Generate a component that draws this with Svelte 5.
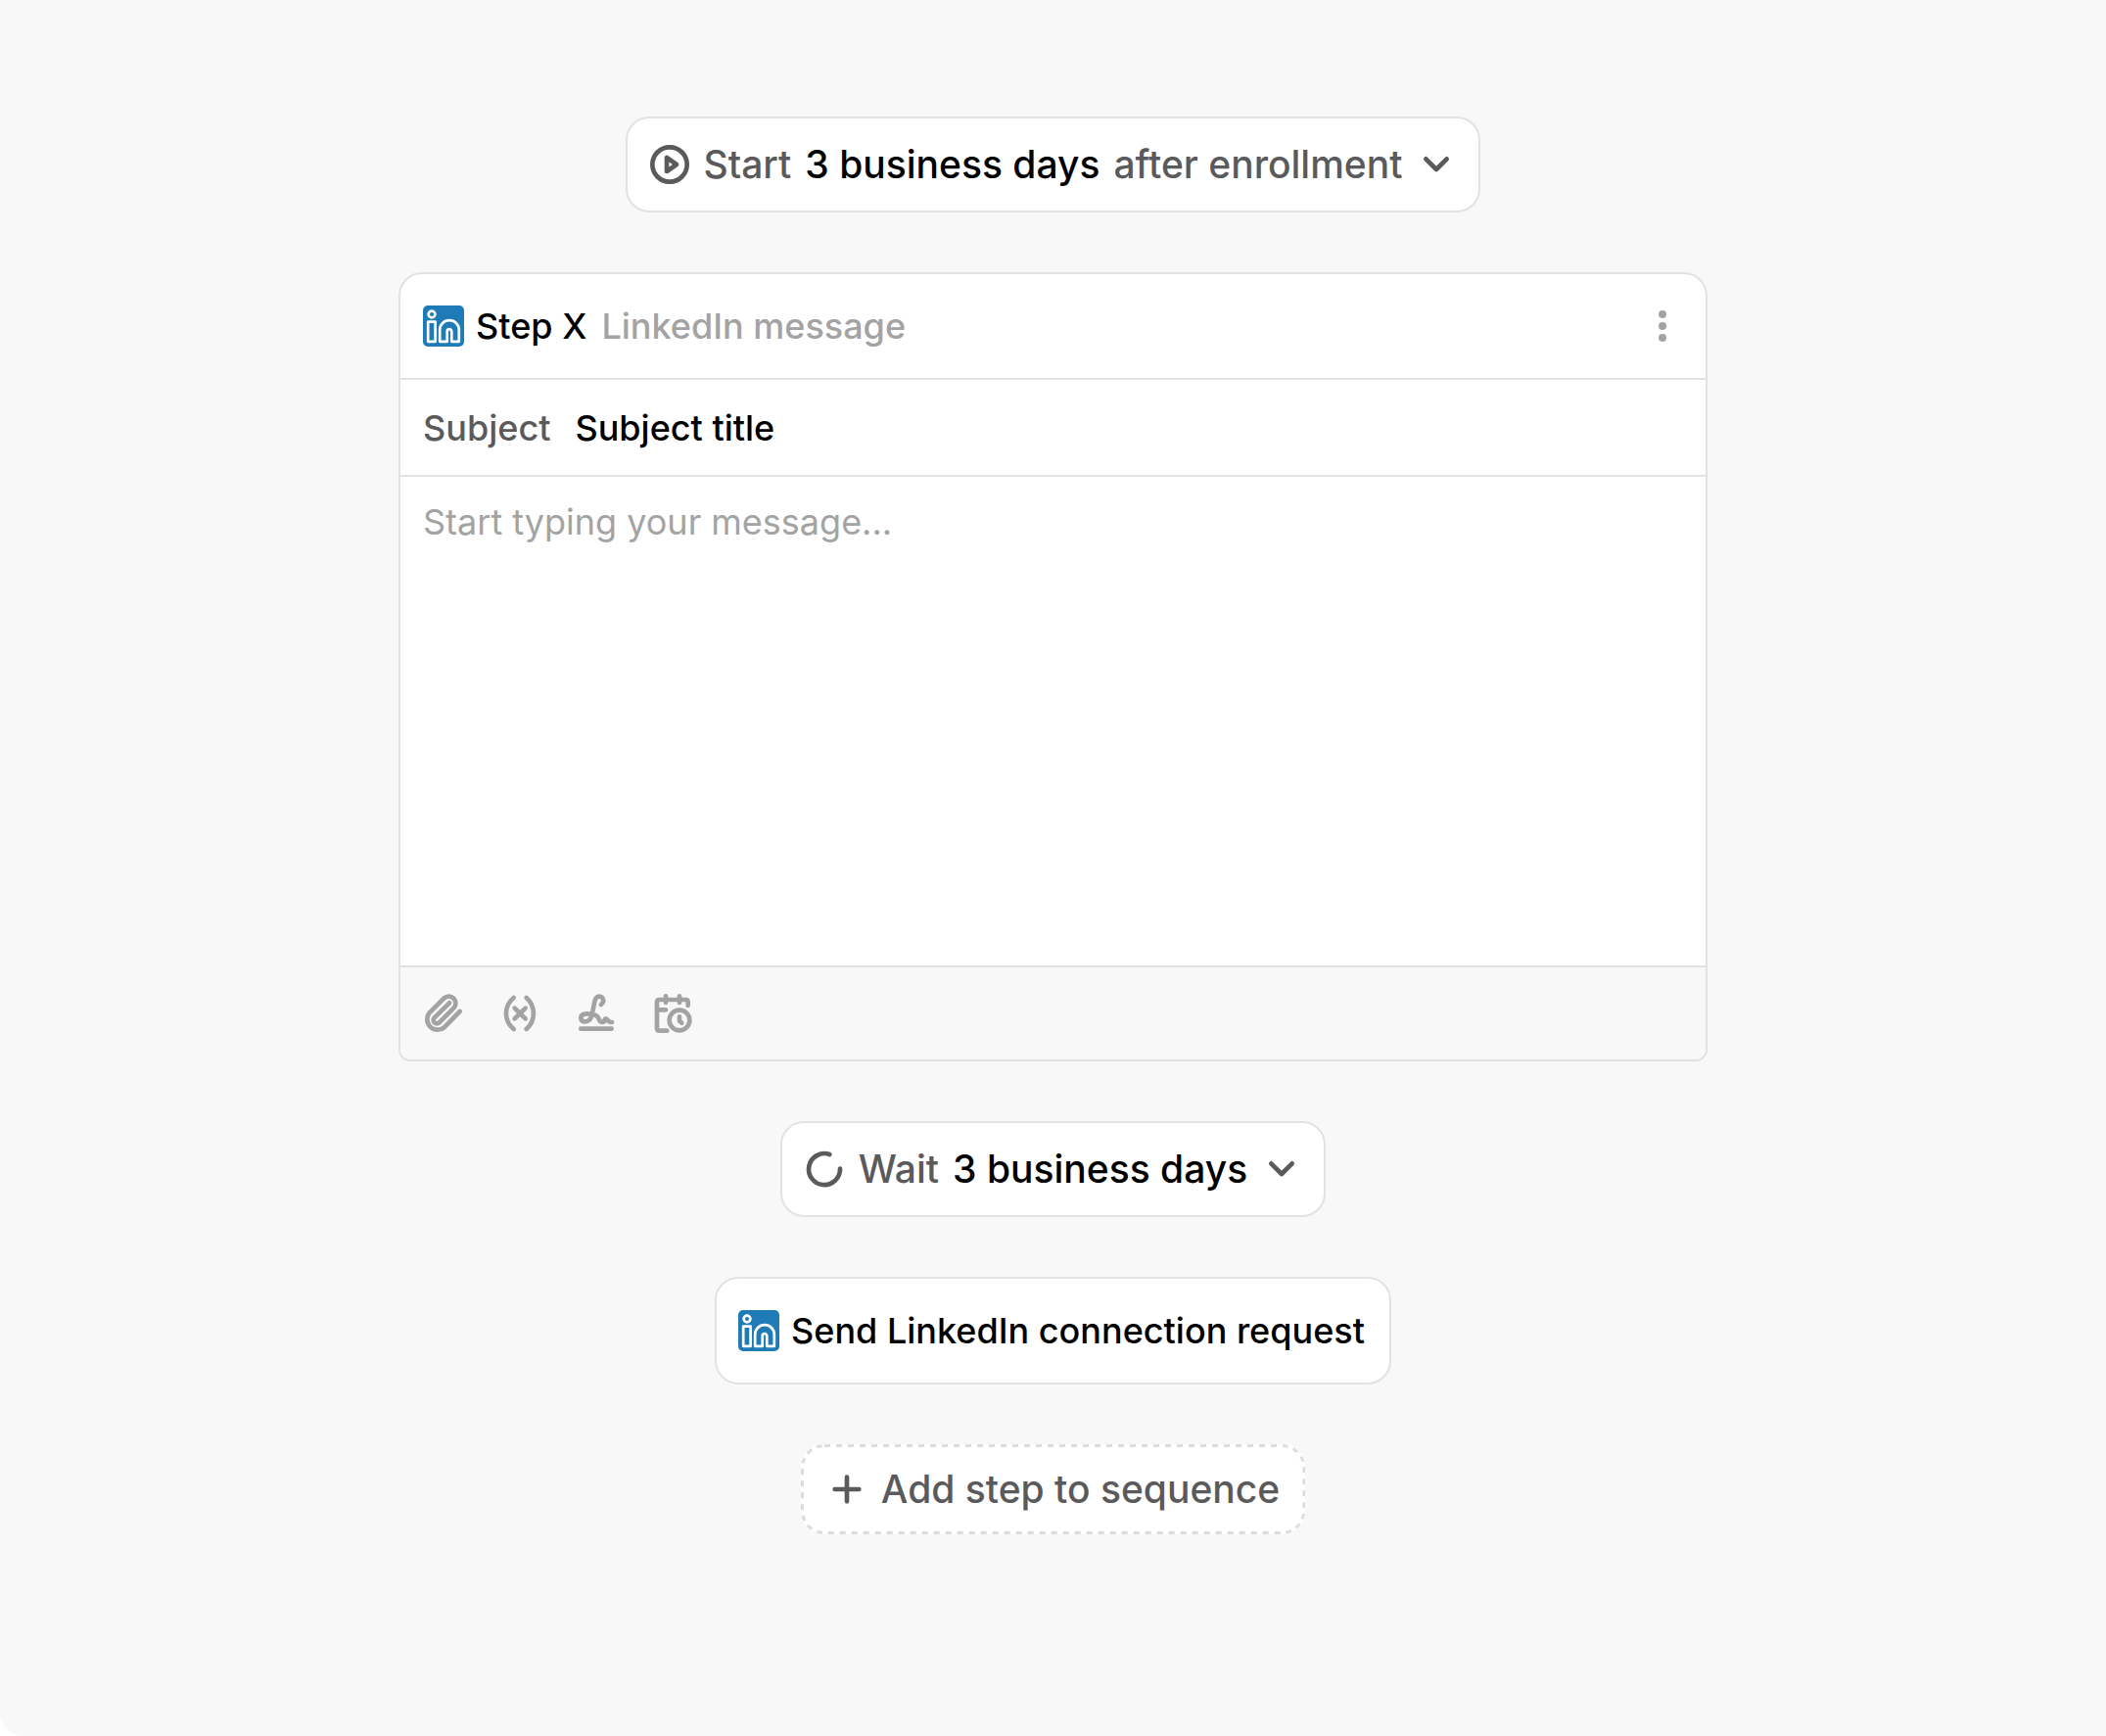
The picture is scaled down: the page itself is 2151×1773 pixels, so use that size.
<script lang="ts">
  let subject = 'Subject title';
  let message = '';

  const tools = [
    {
      label: 'Attach file',
      paths: [
        'M113 57 65 106A32 32 0 0 1 20 61L64 17A21 21 0 0 1 94 47L50 91A10.5 10.5 0 0 1 35 76L81 31'
      ]
    },
    {
      label: 'Insert variable',
      paths: ['M44 15C13 41 13 85 44 111', 'M83 15C112 41 112 85 83 111', 'M47 47 80 79M80 47 47 79']
    },
    {
      label: 'Insert signature',
      paths: [
        'M78 36C90 27 84 11 72 11C63 11 60 18 58 27L50 66C47 80 41 88 29 88C20 88 16 83 16 77C16 69 22 64 34 64C50 64 66 66 70 78C72 86 75 90 83 90C91 90 86 79 92 79C97 79 97 90 111 90',
        'M16 110H110'
      ]
    },
    {
      label: 'Insert meeting time',
      paths: [
        'M110 39V28Q110 21 103 21H22Q15 21 15 28V109Q15 116 22 116H46',
        'M42 10V30M84 10V30M15 52H42',
        'M115 84A31 31 0 1 1 53 84A31 31 0 1 1 115 84Z',
        'M84 73V86L91 92'
      ]
    }
  ];
</script>

{#snippet linkedin()}
  <svg class="icon" viewBox="0 0 42 42" aria-hidden="true">
    <rect width="42" height="42" rx="5" fill="#1e7bb6" />
    <g fill="none" stroke="#fff" stroke-width="2.7" stroke-linejoin="round">
      <circle cx="9" cy="9" r="3.4" />
      <rect x="5.2" y="16.6" width="7.4" height="20.2" />
      <path
        d="M17.2 36.8V25A9.8 9.8 0 0 1 36.8 25V36.8H29.3V26.5A2.3 2.3 0 0 0 24.7 26.5V36.8Z"
      />
    </g>
  </svg>
{/snippet}

{#snippet chevron()}
  <svg class="icon line" viewBox="0 0 126 126" aria-hidden="true">
    <path d="M31 46 63 78 95 46" />
  </svg>
{/snippet}

<main class="canvas">
  <button type="button" class="pill" aria-haspopup="listbox">
    <svg class="icon line" viewBox="0 0 126 126" aria-hidden="true">
      <circle cx="63" cy="63" r="53" />
      <path d="M54 42V84L84 63Z" />
    </svg>
    <span>Start</span>
    <strong>3 business days</strong>
    <span>after enrollment</span>
    {@render chevron()}
  </button>

  <section class="card">
    <header class="card-head">
      {@render linkedin()}
      <div class="title">
        <h2>Step X</h2>
        <p>LinkedIn message</p>
      </div>
      <button type="button" class="more" aria-label="Step options">
        <svg class="icon" viewBox="0 0 42 42" fill="currentColor" aria-hidden="true">
          <circle cx="21" cy="9" r="4" />
          <circle cx="21" cy="21" r="4" />
          <circle cx="21" cy="33" r="4" />
        </svg>
      </button>
    </header>

    <div class="subject">
      <label for="step-subject">Subject</label>
      <input id="step-subject" type="text" bind:value={subject} />
    </div>

    <textarea
      aria-label="Message"
      placeholder="Start typing your message..."
      bind:value={message}
    ></textarea>

    <footer class="toolbar">
      {#each tools as tool}
        <button type="button" aria-label={tool.label}>
          <svg class="icon line" viewBox="0 0 126 126" aria-hidden="true">
            {#each tool.paths as d}
              <path {d} />
            {/each}
          </svg>
        </button>
      {/each}
    </footer>
  </section>

  <button type="button" class="pill" aria-haspopup="listbox">
    <svg class="icon line" viewBox="0 0 126 126" aria-hidden="true">
      <path d="M79 18A48 48 0 1 0 111 62" />
    </svg>
    <span>Wait</span>
    <strong>3 business days</strong>
    {@render chevron()}
  </button>

  <button type="button" class="pill request">
    {@render linkedin()}
    <span>Send LinkedIn connection request</span>
  </button>

  <button type="button" class="pill add">
    <svg class="dashes" aria-hidden="true">
      <rect width="100%" height="100%" rx="24" />
    </svg>
    <svg class="icon line" viewBox="0 0 126 126" aria-hidden="true">
      <path d="M63 26V100M26 63H100" />
    </svg>
    <span>Add step to sequence</span>
  </button>
</main>

<style>
  :global(body) {
    background: #fff;
  }

  .canvas {
    box-sizing: border-box;
    min-height: 100vh;
    padding: 119px 32px;
    display: flex;
    flex-direction: column;
    align-items: center;
    gap: 61px;
    background: #f8f8f8;
    border-bottom-left-radius: 24px;
    color: #000;
    font-family: Inter, sans-serif;
    font-size: 36px;
    line-height: 48px;
  }

  button,
  input,
  textarea {
    font: inherit;
    color: inherit;
  }

  button {
    padding: 0;
    border: 0;
    background: none;
    cursor: pointer;
  }

  .icon {
    display: block;
    flex: none;
    width: 42px;
    height: 42px;
  }

  .line {
    fill: none;
    stroke: currentColor;
    stroke-width: 14;
    stroke-linecap: round;
    stroke-linejoin: round;
  }

  .pill {
    display: flex;
    align-items: center;
    gap: 14px;
    padding: 23px 22px;
    border: 2px solid #e2e2e2;
    border-radius: 24px;
    background: #fff;
    color: #5a5a5c;
    font-size: 39px;
    font-weight: 500;
  }

  .pill strong {
    color: #000;
    font-weight: 500;
  }

  .request {
    gap: 12px;
    padding: 29px 25px 29px 22px;
    color: #000;
    font-size: 36px;
  }

  .add {
    position: relative;
    padding: 22px 26px;
    border: 0;
  }

  /* wider gaps than a dashed border gives */
  .dashes {
    position: absolute;
    inset: 0;
    width: 100%;
    height: 100%;
    border-radius: 24px;
  }

  .dashes rect {
    fill: none;
    stroke: #dcdcdc;
    stroke-width: 6;
    stroke-dasharray: 6 6;
  }

  .card {
    box-sizing: border-box;
    width: 100%;
    max-width: 1337px;
    border: 2px solid #e2e2e2;
    border-radius: 24px 24px 12px 12px;
    background: #fff;
    overflow: hidden;
  }

  .card-head {
    display: flex;
    align-items: center;
    gap: 12px;
    padding: 29px 23px;
    border-bottom: 2px solid #e2e2e2;
  }

  .title {
    display: flex;
    gap: 15px;
  }

  h2,
  p {
    margin: 0;
    font-size: 36px;
    font-weight: 500;
  }

  p,
  .more,
  .toolbar {
    color: #a3a3a3;
  }

  .more {
    margin-left: auto;
  }

  .subject {
    display: flex;
    align-items: center;
    gap: 25px;
    padding: 24px 23px;
    border-bottom: 2px solid #e2e2e2;
    font-weight: 500;
  }

  .subject label {
    color: #5a5a5c;
  }

  .subject input {
    flex: 1;
    min-width: 0;
    height: 49px;
    padding: 0;
    border: 0;
    background: none;
  }

  textarea {
    display: block;
    box-sizing: border-box;
    width: 100%;
    height: 499px;
    padding: 22px 23px;
    border: 0;
    background: none;
    resize: none;
  }

  textarea::placeholder {
    color: #a3a3a3;
    opacity: 1;
  }

  .toolbar {
    display: flex;
    gap: 36px;
    padding: 26px 23px;
    border-top: 2px solid #e2e2e2;
    background: #f8f8f8;
  }
</style>
